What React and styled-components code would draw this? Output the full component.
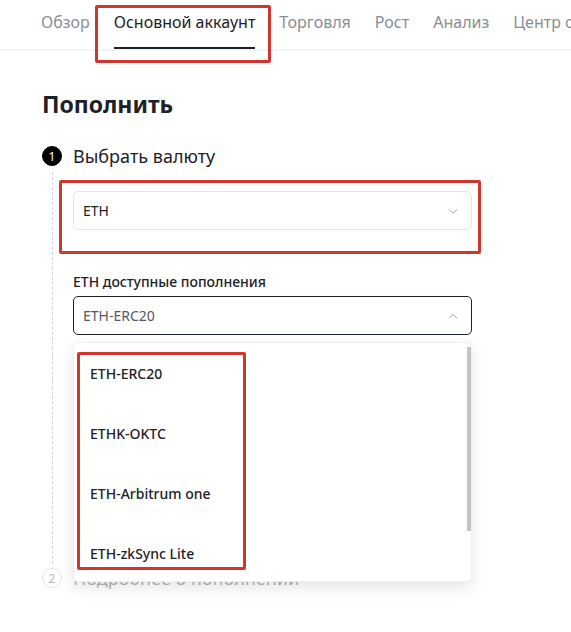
import styled, { createGlobalStyle } from 'styled-components';

const Global = createGlobalStyle`
  body {
    margin: 0;
    background: #fff;
    font-family: "Noto Sans", "Inter", sans-serif;
    color: #1d2129;
  }
  * { box-sizing: border-box; }
`;

const Page = styled.div`
  width: 571px;
  height: 632px;
  overflow: hidden;
`;

const Nav = styled.nav`
  display: flex;
  height: 51px;
  padding-left: 41px;
  border-bottom: 2px solid #f5f5f6;
  white-space: nowrap;
`;

const Tab = styled.div`
  position: relative;
  flex-shrink: 0;
  display: flex;
  align-items: flex-start;
  padding-top: 11px;
  margin-right: 24px;
  font-size: 16px;
  color: ${(p) => (p.$active ? '#1d2129' : '#8a8d94')};
  border-bottom: 2px solid ${(p) => (p.$active ? '#1d2129' : 'transparent')};
  height: 49px;
`;

const Mark = styled.div`
  position: absolute;
  border: 3px solid #d0352e;
  border-radius: 2px;
  pointer-events: none;
  z-index: 3;
`;

const Main = styled.main`
  padding: 38px 0 0 42px;
`;

const Title = styled.h1`
  margin: 0 0 25px;
  font-size: 23px;
  font-weight: 700;
  line-height: 30px;
  color: #1d2129;
`;

const Step = styled.div`
  display: grid;
  grid-template-columns: 20px 1fr;
  column-gap: 11px;
`;

const StepHead = styled.div`
  display: contents;
`;

const Dot = styled.div`
  width: 20px;
  height: 20px;
  border-radius: 50%;
  display: flex;
  align-items: center;
  justify-content: center;
  font-size: 12px;
  background: ${(p) => (p.$done ? '#000' : '#fff')};
  color: ${(p) => (p.$done ? '#fff' : '#b5b7bc')};
  border: 1px solid ${(p) => (p.$done ? '#000' : '#e4e5e7')};
  align-self: center;
`;

const StepTitle = styled.div`
  font-size: 18px;
  line-height: 24px;
  color: ${(p) => (p.$muted ? '#b3b5ba' : '#1d2129')};
`;

const Rail = styled.div`
  justify-self: center;
  width: 0;
  border-left: 1px dashed #d3d4d7;
  margin: 4px 0 2px;
`;

const Body = styled.div`
  padding: 23px 0 231px;
  width: 399px;
`;

const SelectWrap = styled.div`
  position: relative;
`;

const Select = styled.div`
  height: 39px;
  display: flex;
  align-items: center;
  justify-content: space-between;
  padding: 0 12px 0 9px;
  border: 1px solid ${(p) => (p.$open ? '#1d2129' : '#e3e4e6')};
  border-radius: 5px;
  font-size: 14px;
  color: ${(p) => (p.$open ? '#55585e' : '#1d2129')};
`;

const Label = styled.div`
  margin: 42px 0 4px;
  font-size: 14px;
  font-weight: 500;
  line-height: 20px;
`;

const Menu = styled.div`
  position: absolute;
  top: calc(100% + 7px);
  left: 0;
  right: 0;
  height: 240px;
  background: #fff;
  border: 1px solid #efeff1;
  border-radius: 4px;
  box-shadow: 0 6px 16px rgba(0, 0, 0, 0.1);
  z-index: 2;
`;

const Option = styled.div`
  height: 60px;
  display: flex;
  align-items: center;
  padding-left: 16px;
  font-size: 14px;
  font-weight: 500;
  color: #1d2129;
`;

const Thumb = styled.div`
  position: absolute;
  right: 0;
  top: 4px;
  width: 4px;
  height: 184px;
  background: #c4c4c6;
`;

const Chevron = ({ up }) => (
  <svg width="12" height="12" viewBox="0 0 12 12" fill="none">
    <path
      d={up ? 'M2 8L6 4.5L10 8' : 'M2 4.5L6 8L10 4.5'}
      stroke="#a5a7ac"
      strokeWidth="1"
      strokeLinecap="round"
      strokeLinejoin="round"
    />
  </svg>
);

const tabs = ['Обзор', 'Основной аккаунт', 'Торговля', 'Рост', 'Анализ', 'Центр ордеров'];
const chains = ['ETH-ERC20', 'ETHK-OKTC', 'ETH-Arbitrum one', 'ETH-zkSync Lite'];

export default function App() {
  return (
    <Page>
      <Global />
      <Nav>
        {tabs.map((t) => (
          <Tab key={t} $active={t === 'Основной аккаунт'}>
            {t}
            {t === 'Основной аккаунт' && (
              <Mark style={{ left: -19, right: -16, top: 5, bottom: -16 }} />
            )}
          </Tab>
        ))}
      </Nav>
      <Main>
        <Title>Пополнить</Title>
        <Step>
          <StepHead>
            <Dot $done>1</Dot>
            <StepTitle>Выбрать валюту</StepTitle>
          </StepHead>
          <Rail />
          <Body>
            <SelectWrap>
              <Select>
                ETH
                <Chevron />
              </Select>
              <Mark style={{ left: -14, right: -9, top: -11, bottom: -24 }} />
            </SelectWrap>
            <Label>ETH доступные пополнения</Label>
            <SelectWrap>
              <Select $open>
                ETH-ERC20
                <Chevron up />
              </Select>
              <Menu>
                {chains.map((c) => (
                  <Option key={c}>{c}</Option>
                ))}
                <Thumb />
                <Mark style={{ left: 3, top: 9, width: 169, height: 218 }} />
              </Menu>
            </SelectWrap>
          </Body>
          <StepHead>
            <Dot>2</Dot>
            <StepTitle $muted>Подробнее о пополнении</StepTitle>
          </StepHead>
        </Step>
      </Main>
    </Page>
  );
}
